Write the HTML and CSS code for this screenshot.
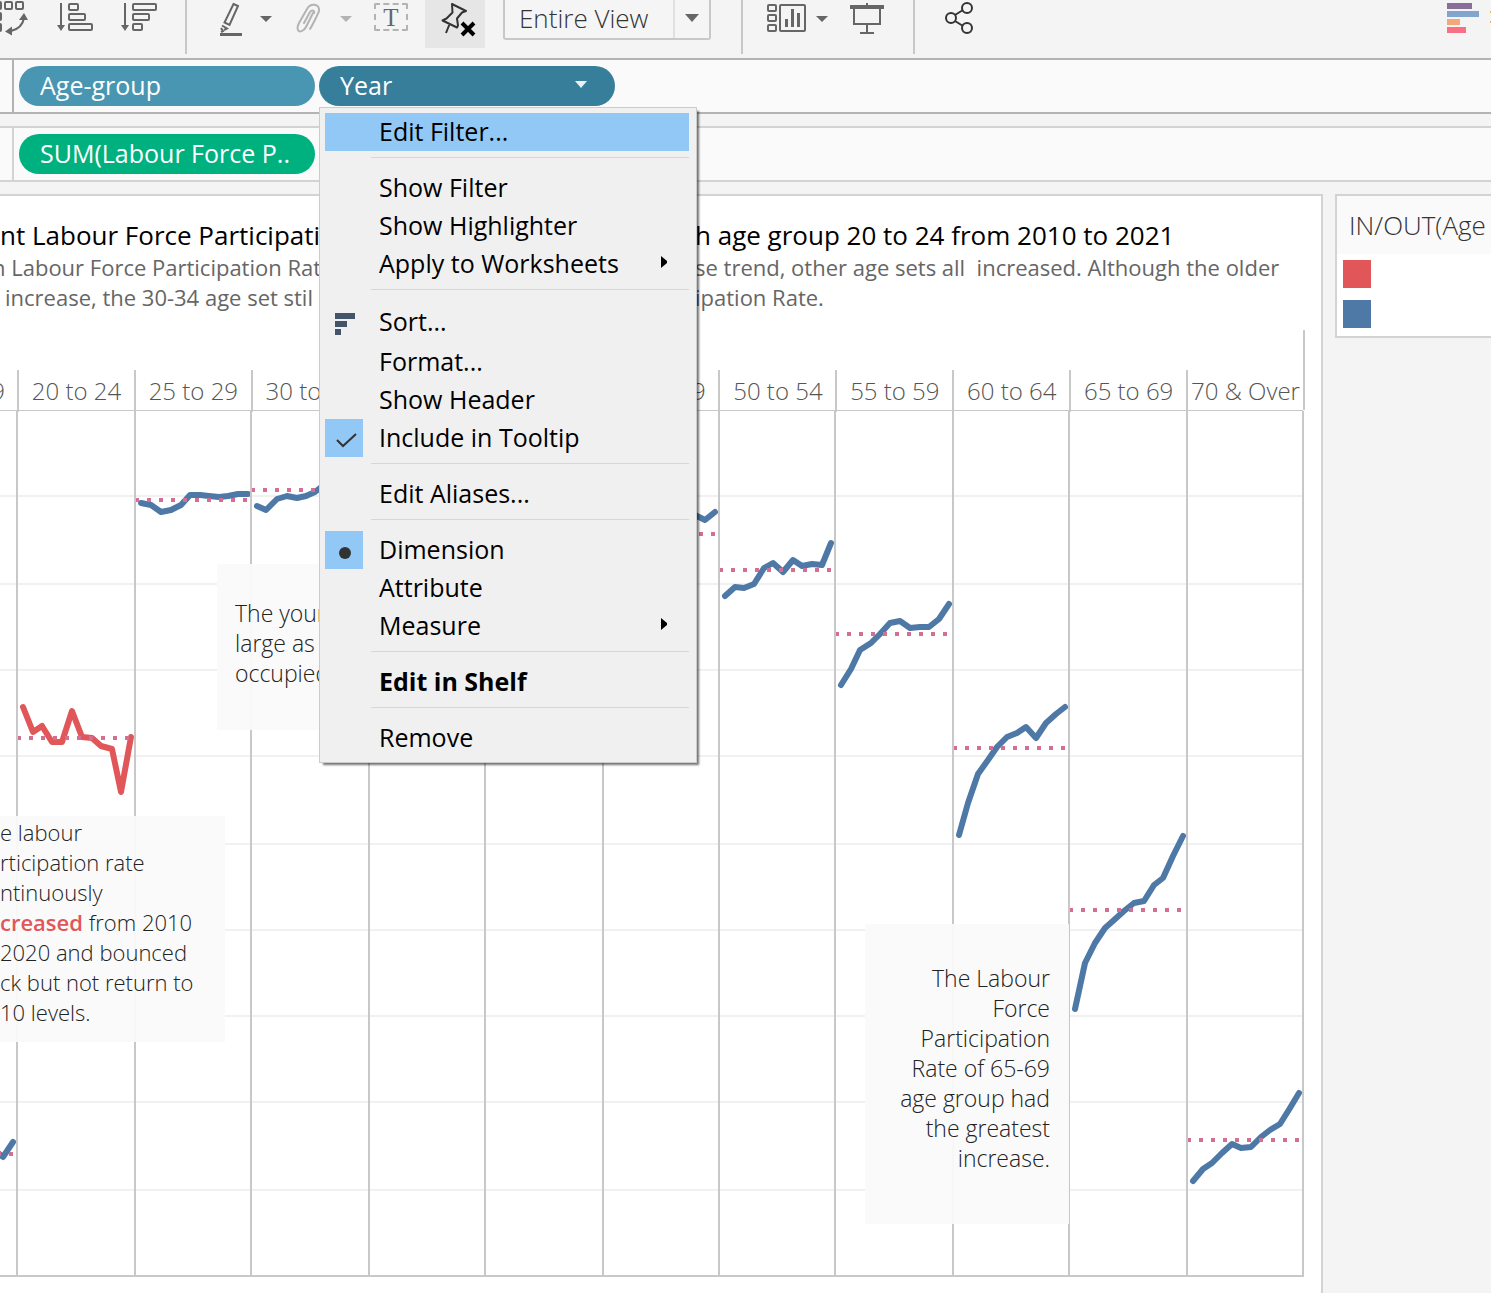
FILE: index.html
```html
<!DOCTYPE html>
<html lang="en">
<head>
<meta charset="utf-8">
<title>Labour Force Participation</title>
<link rel="stylesheet" href="styles.css">
</head>
<body>
<header class="toolbar">
  <button class="tool tool-swap" aria-label="Swap rows and columns"><svg viewBox="0 0 43 48" fill="none" stroke="#666" stroke-width="2"><rect x="-6" y="2" width="7" height="7" rx="1"/><rect x="5" y="2" width="7" height="7" rx="1"/><rect x="16" y="2" width="7" height="7" rx="1"/><rect x="-6" y="13" width="7" height="7" rx="1"/><rect x="-6" y="24" width="7" height="7" rx="1"/><path d="M11 31C19 29 23 24 24 18"/><path d="M24 13l4 7h-9zM5 31.500l7-5v9z" fill="#666" stroke="none"/></svg></button>
  <button class="tool tool-sort" aria-label="Sort ascending"><svg viewBox="43 0 64 48" fill="none" stroke="#666" stroke-width="2"><path d="M61 3v24"/><path d="M57 25h8l-4 6z" fill="#666" stroke="none"/><rect x="69" y="4" width="9" height="6" rx="1"/><rect x="69" y="14" width="16" height="6" rx="1"/><rect x="69" y="24" width="23" height="6" rx="1"/></svg></button>
  <button class="tool tool-sort" aria-label="Sort descending"><svg viewBox="107 0 64 48" fill="none" stroke="#666" stroke-width="2"><path d="M125 3v24"/><path d="M121 25h8l-4 6z" fill="#666" stroke="none"/><rect x="133" y="4" width="23" height="6" rx="1"/><rect x="133" y="14" width="16" height="6" rx="1"/><rect x="133" y="24" width="9" height="6" rx="1"/></svg></button>
  <span class="divider"></span>
  <button class="tool tool-main" aria-label="Highlight"><svg viewBox="201 0 55 48" fill="none" stroke="#666" stroke-width="2"><path d="M233.500 4l4.500 2-8.500 19-5-2.500z"/><path d="M222 25.500l5 3-3 1.500M221 28l2 3-2 1" /><path d="M220 34.500h22" stroke-width="3"/></svg></button>
  <button class="tool tool-caret" aria-label="Highlight options"><svg viewBox="256 0 20 48"><path d="M260 16h12l-6 6z" fill="#666"/></svg></button>
  <button class="tool tool-wide" aria-label="Group members"><svg viewBox="276 0 60 48" fill="none" stroke="#b3b3b3" stroke-width="2" stroke-linecap="round"><path d="M313 13l-7 14c-2 4-7 6-8 3-1-2-1-3 1-7l8-14c3-6 13-6 12 2-1 3-7 15-9 18M304 23l6-11c2-3 5-1 4 1"/></svg></button>
  <button class="tool tool-caret" aria-label="Group options"><svg viewBox="336 0 20 48"><path d="M340 16h12l-6 6z" fill="#b3b3b3"/></svg></button>
  <button class="tool tool-label" aria-label="Show mark labels"><span class="mark-label">T</span></button>
  <button class="tool tool-wide tool-active" aria-label="Fix axes"><svg viewBox="425 0 60 48" fill="none" stroke="#333" stroke-width="2" stroke-linejoin="round"><path d="M452 4l14 7-4 1.500-5 6 1 7-1 2-14.500-7 4-2 6-6zM450 23l-4 10"/><path d="M462 23l12 12M474 23l-12 12" stroke="#000" stroke-width="4"/></svg></button>
  <div class="fit">
    <select class="fit-select" aria-label="Fit"><option>Entire View</option></select>
    <svg class="fit-arrow" viewBox="0 0 36 38"><path d="M1 0v38" stroke="#e0e0e0" stroke-width="2"/><path d="M12 14h14l-7 8z" fill="#666"/></svg>
  </div>
  <span class="divider divider-far"></span>
  <button class="tool tool-main" aria-label="Show or hide cards"><svg viewBox="757 0 55 48" fill="none" stroke="#666" stroke-width="2"><rect x="768" y="5" width="8" height="6" rx="1"/><rect x="768" y="15" width="8" height="6" rx="1"/><rect x="768" y="25" width="8" height="6" rx="1"/><rect x="780" y="5" width="25" height="26" rx="1"/><path d="M786.500 27v-8M792.500 27v-18M798.500 27v-14" stroke-width="3"/></svg></button>
  <button class="tool tool-caret" aria-label="Card options"><svg viewBox="812 0 20 48"><path d="M816 16h12l-6 6z" fill="#666"/></svg></button>
  <button class="tool tool-label" aria-label="Presentation mode"><svg viewBox="832 0 67 48" fill="none" stroke="#666" stroke-width="2"><path d="M850 7h34" stroke-width="4"/><path d="M854 8v16h26v-16M867 3v4M867 24v9M860 33h14"/></svg></button>
  <span class="divider"></span>
  <button class="tool tool-wide" aria-label="Share"><svg viewBox="929 0 60 48" fill="none" stroke="#333" stroke-width="2"><circle cx="951" cy="18" r="5"/><circle cx="967" cy="8" r="5"/><circle cx="967" cy="28" r="5"/><path d="M955 15l8-5M955 21l8 5"/></svg></button>
  <button class="tool tool-showme" aria-label="Show Me"><svg viewBox="1447 0 44 48"><path d="M1447 3h25v6h-25z" fill="#876f9a"/><path d="M1447 11h32v6h-32z" fill="#81a5cd"/><path d="M1447 19h13v6h-13z" fill="#f4a77b"/><path d="M1447 27h19v6h-19z" fill="#f87083"/><path d="M1490 11h1v2h-1zM1490 21h1v2h-1z" fill="#f2b84b"/></svg></button>
</header>

<section class="shelf shelf-active" aria-label="Columns">
  <button class="pill pill-dim">Age-group</button>
  <div class="pill-wrap">
    <button class="pill pill-open" aria-haspopup="menu" aria-expanded="true">Year<svg class="pill-arrow" viewBox="0 0 12 7"><path d="M0 0h12l-6 7z" fill="#e8f1f5"/></svg></button>
    <div class="menu" role="menu">
      <button class="item item-hover" role="menuitem">Edit Filter...</button>
      <hr class="sep">
      <button class="item" role="menuitem">Show Filter</button>
      <button class="item" role="menuitem">Show Highlighter</button>
      <button class="item" role="menuitem">Apply to Worksheets<svg class="sub" viewBox="0 0 6 12"><path d="M0 0l6 5v2l-6 5z"/></svg></button>
      <hr class="sep">
      <button class="item item-tall" role="menuitem"><svg class="mark" viewBox="0 0 38 38" fill="#44546a"><path d="M10 10h20v6h-20zM10 18h12v6h-12zM10 26h6v6h-6z"/></svg>Sort...</button>
      <button class="item" role="menuitem">Format...</button>
      <button class="item" role="menuitem">Show Header</button>
      <button class="item" role="menuitemcheckbox" aria-checked="true"><svg class="mark mark-on" viewBox="0 0 38 38" fill="none" stroke="#333" stroke-width="2"><path d="M12 21l6 6 13-12"/></svg>Include in Tooltip</button>
      <hr class="sep">
      <button class="item" role="menuitem">Edit Aliases...</button>
      <hr class="sep">
      <button class="item" role="menuitemradio" aria-checked="true"><svg class="mark mark-on" viewBox="0 0 38 38"><circle cx="20" cy="22" r="6" fill="#333"/></svg>Dimension</button>
      <button class="item" role="menuitemradio" aria-checked="false">Attribute</button>
      <button class="item" role="menuitem">Measure<svg class="sub" viewBox="0 0 6 12"><path d="M0 0l6 5v2l-6 5z"/></svg></button>
      <hr class="sep">
      <button class="item item-bold" role="menuitem">Edit in Shelf</button>
      <hr class="sep">
      <button class="item" role="menuitem">Remove</button>
    </div>
  </div>
</section>
<section class="shelf" aria-label="Rows">
  <button class="pill pill-measure">SUM(Labour Force P..</button>
</section>

<main class="work">
  <article class="sheet">
    <div class="caption">
      <h1 class="title">nt Labour Force Participati</h1>
      <h1 class="title">h age group 20 to 24 from 2010 to 2021</h1>
      <p class="sub-title sub-cut">n Labour Force Participation Rat</p>
      <p class="sub-title">se trend, other age sets all&nbsp; increased. Although the older</p>
      <p class="sub-title sub-indent">increase, the 30-34 age set stil</p>
      <p class="sub-title">ipation Rate.</p>
    </div>
    <div class="heads">
      <span class="head head-cut">9</span>
      <span class="head">20 to 24</span><span class="head">25 to 29</span><span class="head">30 to 34</span><span class="head">35 to 39</span><span class="head">40 to 44</span><span class="head">45 to 49</span><span class="head">50 to 54</span><span class="head">55 to 59</span><span class="head">60 to 64</span><span class="head">65 to 69</span><span class="head">70 &amp; Over</span>
    </div>
    <div class="plot">
      <svg class="chart" viewBox="0 410 1305 868" fill="none" role="img" aria-label="Labour force participation rate by age group">
        <path stroke="#f1f1f1" stroke-width="2" d="M0 496H1303M0 584H1303M0 670H1303M0 756H1303M0 844H1303M0 930H1303M0 1016H1303M0 1102H1303M0 1190H1303"/>
        <g stroke="#4e79a7" stroke-width="6" stroke-linecap="round" stroke-linejoin="round">
          <polyline points="-6,1150 3,1157 13,1142"/>
          <polyline stroke="#e15759" points="23,707 33,732 42,726 52,742 62,742 72,711 82,737 92,738 101,746 112,749 121,792 131,737"/>
          <polyline points="141,503 151,505 161,512 171,510 181,505 190,495 200,495 209,496 219,497 228,496 238,494 248,494"/>
          <polyline points="257,506 266,510 277,499 287,496 297,498 306,496 315,492 325,484"/>
          <polyline points="687,510 697,516 705,520 715,512"/>
          <polyline points="725,596 735,587 744,588 754,584 764,568 773,563 783,572 793,560 802,566 812,564 822,565 831,543"/>
          <polyline points="841,685 851,669 860,650 871,643 880,634 890,623 900,621 910,628 920,627 929,627 939,619 949,604"/>
          <polyline points="959,835 968,803 978,774 988,760 997,747 1007,737 1017,733 1026,727 1036,738 1046,723 1056,714 1065,707"/>
          <polyline points="1075,1009 1085,963 1095,943 1105,928 1114,920 1124,911 1134,903 1144,901 1154,885 1163,878 1173,856 1183,836"/>
          <polyline points="1193,1181 1203,1169 1212,1163 1222,1153 1232,1144 1241,1148 1251,1147 1261,1137 1270,1130 1280,1124 1290,1108 1299,1093"/>
        </g>
        <g stroke="#d46f94" stroke-width="4" stroke-dasharray="4 8">
          <path d="M-15 1154H15M17 738H133M135 500H249M251 490H367M603 534H717M719 570H833M835 634H951M953 748H1067M1069 910H1185M1187 1140H1301"/>
        </g>
        <path stroke="#c8c8c8" stroke-width="2" d="M17 411V1276M135 411V1276M251 411V1276M369 411V1276M485 411V1276M603 411V1276M719 411V1276M835 411V1276M953 411V1276M1069 411V1276M1187 411V1276M1303 411V1277M0 1276H1303"/>
        <path stroke="#c8c8c8" d="M0 410.500H1303"/>
      </svg>
      <p class="note note-young">The your<br>large as<br>occupied</p>
      <p class="note note-decrease"><span class="cut">e labour</span><span class="cut">rticipation rate</span><span class="cut">ntinuously</span><span class="cut"><b>creased</b> from 2010</span><span class="cut">2020 and bounced</span><span class="cut">ck but not return to</span><span class="cut">10 levels.</span></p>
      <p class="note note-increase">The Labour Force Participation Rate of 65-69 age group had the greatest increase.</p>
    </div>
  </article>
  <aside class="legend">
    <h2 class="legend-title">IN/OUT(Age</h2>
    <div class="swatches"><span class="swatch swatch-in"></span><span class="swatch swatch-out"></span></div>
  </aside>
</main>
</body>
</html>
```
FILE: styles.css
```css
* { box-sizing: border-box; }
body {
  margin: 0;
  min-height: 100vh;
  display: flex;
  flex-direction: column;
  overflow: hidden;
  background: #f4f4f4;
  color: #333;
  font-family: "Open Sans", "Noto Sans", sans-serif;
  font-size: 25px;
}
button { border: 0; padding: 0; margin: 0; background: none; font: inherit; color: inherit; text-align: left; }
h1, h2, p { margin: 0; font-weight: 400; }
svg { display: block; }

.toolbar { display: flex; height: 58px; flex: none; }
.tool { height: 48px; flex: none; display: flex; }
.tool svg { width: 100%; height: 48px; }
.tool-swap { width: 43px; }
.tool-sort { width: 64px; }
.tool-main { width: 55px; }
.tool-caret { width: 20px; }
.tool-wide { width: 60px; }
.tool-label { width: 67px; }
.tool-active { background: #e6e6e6; margin-left: 2px; }
.tool-showme { width: 44px; margin-left: auto; }
.divider { width: 2px; height: 54px; margin: 0 14px; background: #c8c8c8; flex: none; }
.divider-far { margin-left: 30px; }
.mark-label {
  width: 34px;
  height: 28px;
  margin: 3px 0 0 18px;
  border: 2px dashed #b3b3b3;
  border-radius: 2px;
  color: #666;
  font: 25px/25px "Liberation Serif", serif;
  text-align: center;
}
.fit { position: relative; width: 208px; height: 40px; margin-left: 18px; flex: none; }
.fit-select {
  appearance: none;
  width: 100%;
  height: 40px;
  padding: 0 40px 6px 14px;
  border: 2px solid #c8c8c8;
  border-top: 0;
  border-radius: 0 0 3px 3px;
  background: #f5f5f5;
  color: #333;
  font: 300 26px "Open Sans", sans-serif;
}
.fit-arrow { position: absolute; right: 2px; top: 0; width: 36px; height: 38px; pointer-events: none; }

.shelf {
  display: flex;
  gap: 4px;
  flex: none;
  height: 56px;
  padding: 6px 0 0 19px;
  margin-bottom: 12px;
  border: solid #d3d3d3;
  border-width: 2px 0;
  background: linear-gradient(90deg, transparent 12px, #d3d3d3 12px, #d3d3d3 14px, transparent 14px) #fafafa;
}
.shelf-active {
  border-color: #b3b3b3;
  background: linear-gradient(90deg, transparent 12px, #b3b3b3 12px, #b3b3b3 14px, transparent 14px) #fafafa;
}
.pill {
  display: flex;
  align-items: center;
  width: 296px;
  height: 40px;
  padding: 0 28px 3px 21px;
  border-radius: 20px;
  color: #fff;
  white-space: nowrap;
}
.pill-dim { background: #4996b2; }
.pill-open { background: #377e9b; }
.pill-measure { background: #00b180; }
.pill-wrap { position: relative; }
.pill-arrow { width: 12px; height: 7px; margin-left: auto; }

.menu {
  position: absolute;
  z-index: 2;
  top: 41px;
  left: 0;
  width: 378px;
  padding: 5px 7px 5px 5px;
  border: 1px solid #ccc;
  background: #f0f0f0;
  box-shadow: 3px 3px 2px -1px rgba(0, 0, 0, 0.55);
  color: #000;
}
.item { display: flex; align-items: center; width: 100%; height: 38px; padding: 0 0 2px 54px; }
.item-tall { height: 42px; }
.item-hover { background: #91c8f6; }
.item-bold { font-weight: 700; }
.mark { width: 38px; height: 38px; margin: 0 16px -2px -54px; }
.mark-on { background: #91c8f6; }
.sub { width: 6px; height: 12px; margin: 0 22px 2px auto; }
.sep { height: 1px; margin: 6px 0 11px 46px; border: 0; background: #d7d7d7; }

.work { display: grid; grid-template-columns: minmax(0, 1fr) 156px; gap: 12px; flex: 1; }
.sheet { border: solid #d3d3d3; border-width: 2px 2px 0 0; background: #fff; overflow: hidden; }
.caption {
  display: grid;
  grid-template-columns: 695px 1fr;
  height: 134px;
  padding-top: 22px;
  align-content: start;
  white-space: nowrap;
}
.title { font-size: 26px; line-height: 34px; color: #000; }
.sub-title { font-size: 22px; font-weight: 500; line-height: 30px; color: #666; }
.sub-cut { margin-left: -8px; }
.sub-indent { padding-left: 5px; }
.heads {
  display: grid;
  grid-template-columns: 17px repeat(11, minmax(0, 1fr));
  height: 80px;
  margin-right: 16px;
  padding-top: 40px;
  border-right: 2px solid #c8c8c8;
}
.head {
  border-left: 2px solid #c8c8c8;
  font-size: 24px;
  font-weight: 300;
  line-height: 42px;
  text-align: center;
  white-space: nowrap;
  color: #555;
}
.head-cut { display: flex; justify-content: flex-end; border: 0; padding-right: 12px; }
.plot { position: relative; margin-right: 16px; }
.chart { width: 100%; }
.note { position: absolute; background: rgba(250, 250, 250, 0.95); font-size: 23px; font-weight: 300; line-height: 30px; color: #222; }
.note b { font-weight: 600; color: #e15759; }
.note-young { left: 217px; top: 154px; width: 240px; height: 166px; padding: 34px 18px; }
.note-decrease { left: 0; top: 406px; width: 225px; height: 226px; padding-top: 1px; font-size: 22px; }
.note-increase { left: 865px; top: 514px; width: 204px; height: 300px; padding: 39px 19px 0 30px; text-align: right; }
.cut { display: block; white-space: nowrap; }

.legend { align-self: start; height: 144px; border: 2px solid #d3d3d3; border-right: 0; background: #fff; overflow: hidden; }
.legend-title { height: 58px; padding-left: 12px; background: #fafafa; font-size: 26px; font-weight: 300; line-height: 58px; white-space: nowrap; }
.swatches { display: grid; gap: 12px; padding: 6px; }
.swatch { width: 28px; height: 28px; }
.swatch-in { background: #e15759; }
.swatch-out { background: #4e79a7; }
```
